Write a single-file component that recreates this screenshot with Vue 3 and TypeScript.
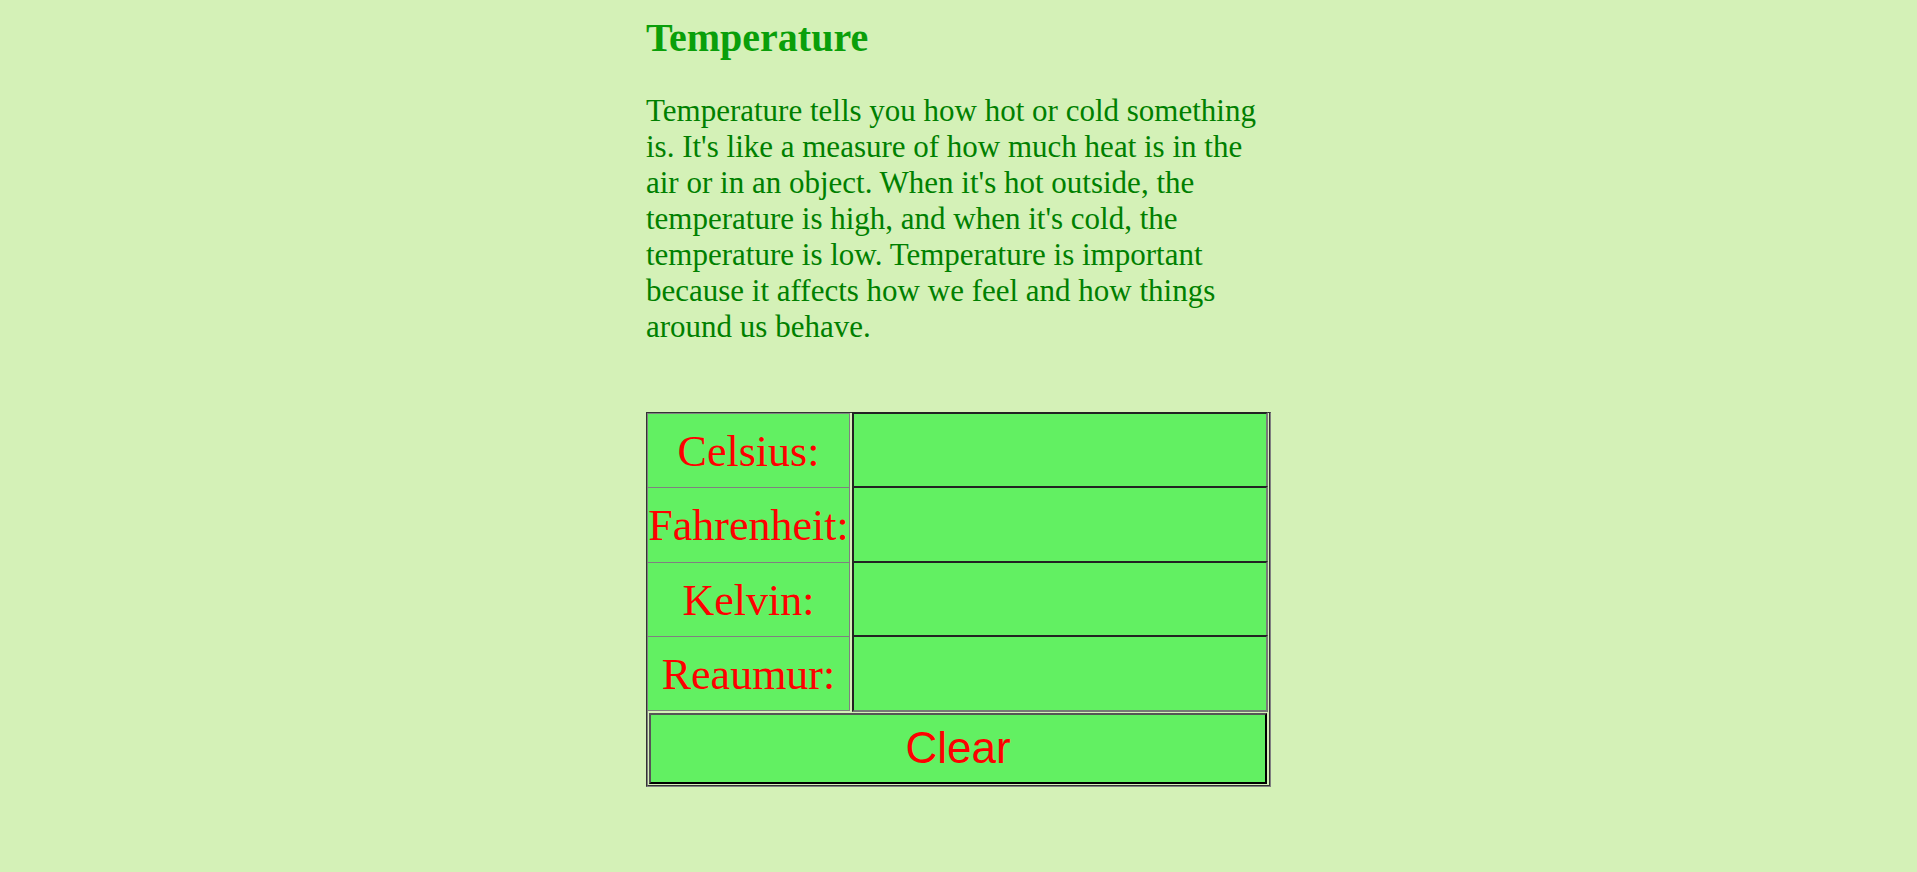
<script setup lang="ts">
import { reactive } from 'vue'

type Scale = 'celsius' | 'fahrenheit' | 'kelvin' | 'reaumur'

const scales: { id: Scale; label: string }[] = [
  { id: 'celsius', label: 'Celsius:' },
  { id: 'fahrenheit', label: 'Fahrenheit:' },
  { id: 'kelvin', label: 'Kelvin:' },
  { id: 'reaumur', label: 'Reaumur:' },
]

const values = reactive<Record<Scale, string>>({
  celsius: '',
  fahrenheit: '',
  kelvin: '',
  reaumur: '',
})

function toCelsius(id: Scale, n: number): number {
  if (id === 'fahrenheit') return ((n - 32) * 5) / 9
  if (id === 'kelvin') return n - 273.15
  if (id === 'reaumur') return n * 1.25
  return n
}

function fromCelsius(id: Scale, c: number): number {
  if (id === 'fahrenheit') return (c * 9) / 5 + 32
  if (id === 'kelvin') return c + 273.15
  if (id === 'reaumur') return c * 0.8
  return c
}

function convert(source: Scale) {
  const n = parseFloat(values[source])
  for (const { id } of scales) {
    if (id === source) continue
    values[id] = Number.isNaN(n) ? '' : fromCelsius(id, toCelsius(source, n)).toFixed(2)
  }
}

function clear() {
  for (const { id } of scales) values[id] = ''
}
</script>

<template>
  <main class="page">
    <h1>Temperature</h1>
    <p>
      Temperature tells you how hot or cold something is. It's like a measure of how much heat is in
      the air or in an object. When it's hot outside, the temperature is high, and when it's cold, the
      temperature is low. Temperature is important because it affects how we feel and how things
      around us behave.
    </p>
    <table>
      <tbody>
        <tr v-for="scale in scales" :key="scale.id" :class="['scale', scale.id]">
          <th scope="row"><label :for="scale.id">{{ scale.label }}</label></th>
          <td class="field">
            <input :id="scale.id" v-model="values[scale.id]" type="text" @input="convert(scale.id)" />
          </td>
        </tr>
        <tr>
          <td class="action" colspan="2"><button type="button" @click="clear">Clear</button></td>
        </tr>
      </tbody>
    </table>
  </main>
</template>

<style>
body {
  background: #d4f1b7;
}
</style>

<style scoped>
.page {
  width: 625px;
  max-width: 100%;
  margin: 0 auto;
  padding-top: 15px;
  font-family: 'Liberation Serif', 'Times New Roman', serif;
}

h1 {
  margin: 0;
  font-size: 40px;
  line-height: 46px;
  color: #0a9f0a;
}

p {
  margin: 32px 0 67px;
  font-size: 31px;
  line-height: 36px;
  color: #008000;
}

table {
  width: 100%;
  border-collapse: separate;
  border-spacing: 0;
  border: 1px solid #808080;
  border-top-color: #333;
  border-left-color: #333;
}

.scale {
  --row: 74px;
}

.celsius,
.fahrenheit {
  --row: 75px;
}

th,
td {
  box-sizing: border-box;
  padding: 0;
}

th {
  width: 203px;
  height: var(--row);
  padding-top: 2px;
  border: 1px solid #808080;
  border-top: 0;
  background: #62f062;
  font-size: 44px;
  font-weight: normal;
  line-height: 50px;
  color: #f00;
}

.celsius th {
  border-top: 1px solid #808080;
}

.field {
  height: var(--row);
  padding: 0 1px 0 2px;
  border-right: 1px solid #333;
  vertical-align: top;
}

/* Each box reaches up over the rule of the row before it. */
input {
  display: block;
  box-sizing: border-box;
  width: 100%;
  height: calc(var(--row) + 2px);
  margin: -2px 0 0;
  padding: 0 8px;
  border: 2px solid #222;
  border-right-color: #777;
  border-bottom: 0;
  border-radius: 0;
  background: #62f062;
  font: 44px 'Liberation Serif', 'Times New Roman', serif;
  color: #f00;
}

.celsius input {
  height: calc(var(--row) + 1px);
  margin-top: -1px;
}

.reaumur input {
  height: calc(var(--row) + 3px);
  margin-bottom: -1px;
  border-bottom: 2px solid #777;
}

.action {
  padding: 2px 2px 1px 1px;
  border: 1px solid #333;
  border-top: 0;
  border-left-color: #808080;
}

button {
  display: block;
  box-sizing: border-box;
  width: 100%;
  height: 71px;
  padding: 0 0 2px;
  border: 2px solid #555;
  border-right-color: #000;
  border-bottom-color: #000;
  border-radius: 0;
  background: #62f062;
  font: 44px 'Liberation Sans', Arial, sans-serif;
  color: #f00;
}
</style>
